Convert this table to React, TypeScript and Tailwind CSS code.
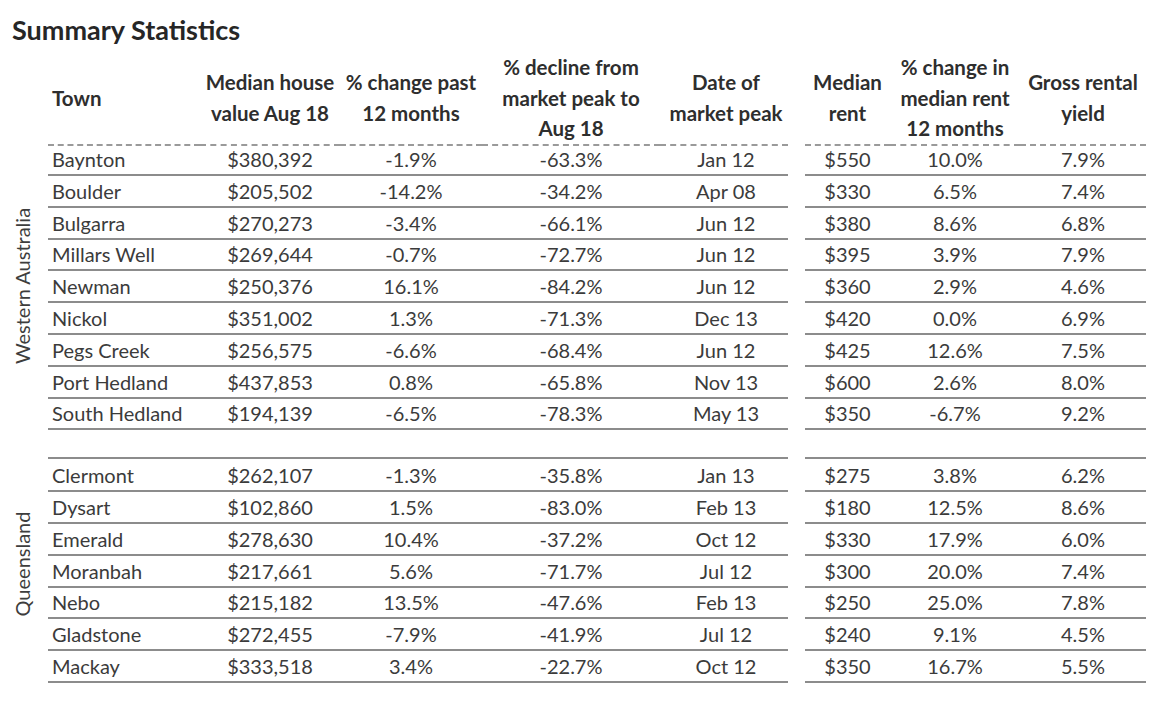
import React from "react";

type Row = [string, string, string, string, string, string, string, string];

const wa: Row[] = [
  ["Baynton", "$380,392", "-1.9%", "-63.3%", "Jan 12", "$550", "10.0%", "7.9%"],
  ["Boulder", "$205,502", "-14.2%", "-34.2%", "Apr 08", "$330", "6.5%", "7.4%"],
  ["Bulgarra", "$270,273", "-3.4%", "-66.1%", "Jun 12", "$380", "8.6%", "6.8%"],
  ["Millars Well", "$269,644", "-0.7%", "-72.7%", "Jun 12", "$395", "3.9%", "7.9%"],
  ["Newman", "$250,376", "16.1%", "-84.2%", "Jun 12", "$360", "2.9%", "4.6%"],
  ["Nickol", "$351,002", "1.3%", "-71.3%", "Dec 13", "$420", "0.0%", "6.9%"],
  ["Pegs Creek", "$256,575", "-6.6%", "-68.4%", "Jun 12", "$425", "12.6%", "7.5%"],
  ["Port Hedland", "$437,853", "0.8%", "-65.8%", "Nov 13", "$600", "2.6%", "8.0%"],
  ["South Hedland", "$194,139", "-6.5%", "-78.3%", "May 13", "$350", "-6.7%", "9.2%"],
];

const qld: Row[] = [
  ["Clermont", "$262,107", "-1.3%", "-35.8%", "Jan 13", "$275", "3.8%", "6.2%"],
  ["Dysart", "$102,860", "1.5%", "-83.0%", "Feb 13", "$180", "12.5%", "8.6%"],
  ["Emerald", "$278,630", "10.4%", "-37.2%", "Oct 12", "$330", "17.9%", "6.0%"],
  ["Moranbah", "$217,661", "5.6%", "-71.7%", "Jul 12", "$300", "20.0%", "7.4%"],
  ["Nebo", "$215,182", "13.5%", "-47.6%", "Feb 13", "$250", "25.0%", "7.8%"],
  ["Gladstone", "$272,455", "-7.9%", "-41.9%", "Jul 12", "$240", "9.1%", "4.5%"],
  ["Mackay", "$333,518", "3.4%", "-22.7%", "Oct 12", "$350", "16.7%", "5.5%"],
];

const cols = "grid grid-cols-[152px_140px_142px_178px_128px_17px_85px_130px_126px]";
const line = "border-b-2 border-[#8c8c8c]";

function DataRow({ r }: { r: Row }) {
  return (
    <div className={`${cols} h-[31.8px] items-stretch`}>
      <div className={`${line} flex items-center pl-[4px] pt-[1px]`}>{r[0]}</div>
      <div className={`${line} flex items-center justify-center pt-[1px]`}>{r[1]}</div>
      <div className={`${line} flex items-center justify-center pt-[1px]`}>{r[2]}</div>
      <div className={`${line} flex items-center justify-center pt-[1px]`}>{r[3]}</div>
      <div className={`${line} flex items-center justify-center pl-[4px] pt-[1px]`}>{r[4]}</div>
      <div />
      <div className={`${line} flex items-center justify-center pt-[1px]`}>{r[5]}</div>
      <div className={`${line} flex items-center justify-center pt-[1px]`}>{r[6]}</div>
      <div className={`${line} flex items-center justify-center pt-[1px]`}>{r[7]}</div>
    </div>
  );
}

function EmptyRow() {
  return (
    <div className={`${cols} h-[30px]`}>
      <div className={line} />
      <div className={line} />
      <div className={line} />
      <div className={line} />
      <div className={line} />
      <div />
      <div className={line} />
      <div className={line} />
      <div className={line} />
    </div>
  );
}

function Section({ label, rows, shift }: { label: string; rows: Row[]; shift: string }) {
  return (
    <div className="flex">
      <div className="w-[48px] flex items-center justify-center">
        <div className={`-rotate-90 whitespace-nowrap text-[20px] text-[#3d3d3d] ${shift}`}>{label}</div>
      </div>
      <div className="flex flex-col">
        {rows.map((r) => (
          <DataRow key={r[0]} r={r} />
        ))}
      </div>
    </div>
  );
}

export default function App() {
  const hdr = "border-b-2 border-dashed border-[#9a9a9a] flex items-center justify-center text-center";
  return (
    <div
      className="w-[1160px] h-[704px] bg-white text-[#3b3b3b] overflow-hidden"
      style={{ fontFamily: "Lato, 'Open Sans', sans-serif" }}
    >
      <div className="pl-[12px] pt-[14px] h-[52px] text-[27px] font-bold text-[#262626] leading-[32px]">
        Summary Statistics
      </div>
      <div className="text-[20px]">
        <div className="flex">
          <div className="w-[48px]" />
          <div className={`${cols} h-[91px] font-bold text-[20.5px] leading-[30.5px] text-[#2e2e2e]`}>
            <div className={`${hdr} !justify-start pl-[4px]`}>Town</div>
            <div className={hdr}>
              Median house
              <br />
              value Aug 18
            </div>
            <div className={hdr}>
              % change past
              <br />
              12 months
            </div>
            <div className={hdr}>
              % decline from
              <br />
              market peak to
              <br />
              Aug 18
            </div>
            <div className={`${hdr} pl-[4px]`}>
              Date of
              <br />
              market peak
            </div>
            <div />
            <div className={hdr}>
              Median
              <br />
              rent
            </div>
            <div className={hdr}>
              % change in
              <br />
              median rent
              <br />
              12 months
            </div>
            <div className={hdr}>
              Gross rental
              <br />
              yield
            </div>
          </div>
        </div>
        <Section label="Western Australia" rows={wa} shift="translate-x-[-2px]" />
        <div className="flex">
          <div className="w-[48px]" />
          <EmptyRow />
        </div>
        <Section label="Queensland" rows={qld} shift="translate-x-[-2px] translate-y-[-6px]" />
      </div>
    </div>
  );
}
